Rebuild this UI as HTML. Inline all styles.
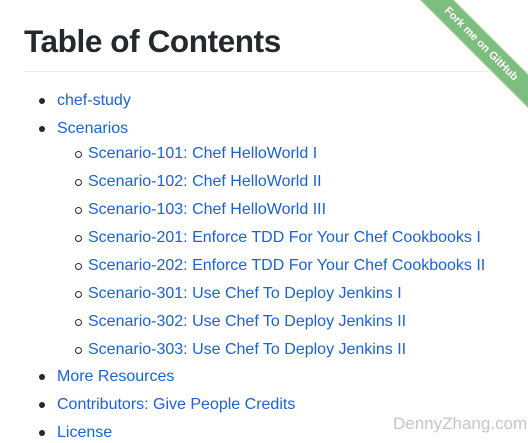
<!DOCTYPE html>
<html><head><style>
body{margin:0;width:528px;height:442px;overflow:hidden;background:#fff;font-family:"Liberation Sans",Arial,sans-serif;position:relative}
h1{position:absolute;left:24px;top:23px;margin:0;font-size:31.5px;font-weight:bold;color:#24292e;letter-spacing:-0.4px}
.hr{position:absolute;left:24px;right:0;top:71px;height:1px;background:#eaecef}
.it{position:absolute;font-size:16px;color:#1a62d8;line-height:20px;white-space:nowrap}
.b{position:absolute;width:6px;height:6px;border-radius:50%;background:#24292e}
.c{position:absolute;border-radius:50%;border:1px solid #24292e;box-sizing:border-box;width:7px;height:7px}
.rib{position:absolute;left:381px;top:32px;width:200px;height:24px;background:#7dbd7d;transform:rotate(45deg);color:#fff;font-size:11px;font-weight:bold;text-align:center;line-height:24px;box-shadow:0 0 0 1px rgba(255,255,255,.3) inset}
.wm{position:absolute;left:393px;top:414px;font-size:17px;color:#cbc2cf}
</style></head><body>
<h1>Table of Contents</h1>
<div class="hr"></div>
<div class="rib">Fork me on GitHub</div>
<div class="b" style="left:39px;top:98px"></div><div class="it" style="left:57px;top:91px">chef-study</div>
<div class="b" style="left:39px;top:126px"></div><div class="it" style="left:57px;top:119px">Scenarios</div>
<div class="c" style="left:75px;top:151px"></div><div class="it" style="left:88px;top:144px">Scenario-101: Chef HelloWorld I</div>
<div class="c" style="left:75px;top:179px"></div><div class="it" style="left:88px;top:172px">Scenario-102: Chef HelloWorld II</div>
<div class="c" style="left:75px;top:207px"></div><div class="it" style="left:88px;top:200px">Scenario-103: Chef HelloWorld III</div>
<div class="c" style="left:75px;top:235px"></div><div class="it" style="left:88px;top:228px">Scenario-201: Enforce TDD For Your Chef Cookbooks I</div>
<div class="c" style="left:75px;top:263px"></div><div class="it" style="left:88px;top:256px">Scenario-202: Enforce TDD For Your Chef Cookbooks II</div>
<div class="c" style="left:75px;top:291px"></div><div class="it" style="left:88px;top:284px">Scenario-301: Use Chef To Deploy Jenkins I</div>
<div class="c" style="left:75px;top:319px"></div><div class="it" style="left:88px;top:312px">Scenario-302: Use Chef To Deploy Jenkins II</div>
<div class="c" style="left:75px;top:347px"></div><div class="it" style="left:88px;top:340px">Scenario-303: Use Chef To Deploy Jenkins II</div>
<div class="b" style="left:39px;top:374px"></div><div class="it" style="left:57px;top:367px">More Resources</div>
<div class="b" style="left:39px;top:402px"></div><div class="it" style="left:57px;top:395px">Contributors: Give People Credits</div>
<div class="b" style="left:39px;top:430px"></div><div class="it" style="left:57px;top:423px">License</div>
<div class="wm">DennyZhang.com</div>
</body></html>
